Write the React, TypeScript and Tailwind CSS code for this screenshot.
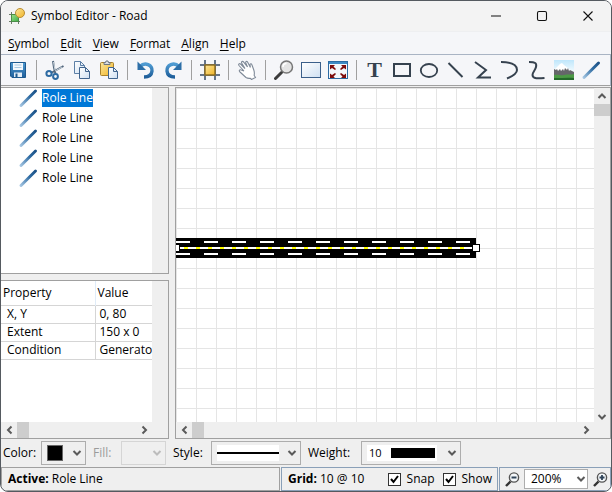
import type { ReactNode } from "react";

const steel = "#36424f";

function Icon({ children, size = 20 }: { children: ReactNode; size?: number }) {
  return (
    <svg width={size} height={size} viewBox="0 0 20 20" fill="none" aria-hidden="true" className="shrink-0">
      {children}
    </svg>
  );
}

function Gradients() {
  return (
    <svg width="0" height="0" aria-hidden="true" className="absolute">
      <defs>
        <linearGradient id="role" gradientUnits="userSpaceOnUse" x1="2" y1="18" x2="17" y2="2">
          <stop offset="0" stopColor="#a9c9e4" />
          <stop offset="0.6" stopColor="#2f6ca3" />
          <stop offset="1" stopColor="#1d5287" />
        </linearGradient>
        <linearGradient id="sheet" x1="0" y1="0" x2="1" y2="1">
          <stop offset="0" stopColor="#fff" />
          <stop offset="1" stopColor="#cfe0f2" />
        </linearGradient>
        <linearGradient id="gold" x1="0" y1="0" x2="1" y2="1">
          <stop offset="0" stopColor="#fbe69a" />
          <stop offset="1" stopColor="#f0b428" />
        </linearGradient>
        <linearGradient id="green" x1="0" y1="0" x2="1" y2="1">
          <stop offset="0" stopColor="#9be08a" />
          <stop offset="1" stopColor="#3fae48" />
        </linearGradient>
        <linearGradient id="blue" x1="0" y1="0" x2="0" y2="1">
          <stop offset="0" stopColor="#4f9bd2" />
          <stop offset="1" stopColor="#1f5f9b" />
        </linearGradient>
        <linearGradient id="sky" x1="0" y1="0" x2="0" y2="1">
          <stop offset="0" stopColor="#bfe6fb" />
          <stop offset="0.6" stopColor="#f2fbff" />
        </linearGradient>
      </defs>
    </svg>
  );
}

const RoleIcon = () => (
  <Icon>
    <path d="M3 17.500 17.500 3" stroke="url(#role)" strokeWidth="3" strokeLinecap="round" />
  </Icon>
);

const Magnifier = () => (
  <Icon>
    <path d="m1.500 18.500 6-6" stroke="#3c3c3c" strokeWidth="3" strokeLinecap="round" />
    <circle cx="12.500" cy="7" r="6" fill="#e4e4e4" stroke="#777" strokeWidth="1.500" />
    <path d="M9 7c0-2 1.500-3.500 3.500-3.500" stroke="#fff" strokeWidth="1.500" />
  </Icon>
);

type Tool = { label: string; icon: ReactNode };

const groups: Tool[][] = [
  [
    {
      label: "Save",
      icon: (
        <Icon>
          <path d="M2.500 2.500h15v15H4l-1.500-1.500z" fill="url(#blue)" stroke="#1d5a90" />
          <path d="M5 3h10v7H5z" fill="#f4f9fd" />
          <path d="M6.500 5h7M6.500 7.500h7" stroke="#a9c8e0" />
          <path d="M6 12.500h8V17H6z" fill="#e4eef7" />
          <path d="M7.500 13.500h2V17h-2z" fill="#1d5a90" />
        </Icon>
      ),
    },
  ],
  [
    {
      label: "Cut",
      icon: (
        <Icon>
          <path d="m8 1 1 6.500 1.500 6.500M18.500 6 6 13" stroke="#53687e" strokeWidth="2" />
          <path d="m8.500 2 1.500 8M17 7l-7 4" stroke="#e6edf3" strokeWidth="0.800" />
          <circle cx="4" cy="13.500" r="2.600" stroke="#2d6ba3" strokeWidth="2" />
          <circle cx="10.500" cy="16.500" r="2.400" stroke="#2d6ba3" strokeWidth="2" />
        </Icon>
      ),
    },
    {
      label: "Copy",
      icon: (
        <Icon>
          <path d="M2.500 1.500h6l4 4v8h-10z" fill="url(#sheet)" stroke="#5c7fa6" />
          <path d="M8.500 1.500v4h4" stroke="#5c7fa6" />
          <path d="M7.500 7.500h6l4 4v7h-10z" fill="url(#sheet)" stroke="#41658f" />
          <path d="M13.500 7.500v4h4" stroke="#41658f" />
        </Icon>
      ),
    },
    {
      label: "Paste",
      icon: (
        <Icon>
          <rect x="1.500" y="2.500" width="13" height="13" rx="1" fill="url(#gold)" stroke="#a9812b" />
          <path d="M5 4.500v-2h1.500L7 1h2l.5 1.500H11v2z" fill="#d9dde2" stroke="#6d7682" />
          <path d="M9.500 7.500h5l4 4v7h-9z" fill="url(#sheet)" stroke="#41658f" />
          <path d="M14.500 7.500v4h4" stroke="#41658f" />
        </Icon>
      ),
    },
  ],
  [
    {
      label: "Undo",
      icon: (
        <Icon>
          <path d="M4 6.500C9 1.500 16.500 5 16 11c-.4 4-3.500 6-8 6" stroke="url(#blue)" strokeWidth="3.400" />
          <path d="M1.500 1.500v8.500H10z" fill="#2d6fa8" />
        </Icon>
      ),
    },
    {
      label: "Redo",
      icon: (
        <Icon>
          <path d="M16 6.500C11 1.500 3.500 5 4 11c.4 4 3.500 6 8 6" stroke="url(#blue)" strokeWidth="3.400" />
          <path d="M18.500 1.500v8.500H10z" fill="#2d6fa8" />
        </Icon>
      ),
    },
  ],
  [
    {
      label: "Grid",
      icon: (
        <Icon>
          <path d="M5 0v20M15 0v20M0 5h20M0 15h20" stroke="#66758a" strokeWidth="2" />
          <rect x="5" y="5" width="10" height="10" fill="url(#gold)" stroke="#8a6a1c" strokeWidth="1.400" />
        </Icon>
      ),
    },
  ],
  [
    {
      label: "Pan",
      icon: (
        <Icon>
          <path
            d="M9 17.500 3 12c-1.500-1.500-.2-2.600 1.200-2L7 11 2 5.500C1 4 2.500 3 3.600 4L8 8.500 4.800 3.200C4 1.700 5.700.8 6.700 2.100L10.500 7 8.800 2.900C8.300 1.400 9.900.8 10.700 2.200l2.700 5.200-.4-2.600c0-1.300 1.400-1.500 1.800-.3l2 5.500c.6 1.700.7 3.700.3 5.200l1.400 2.300-4 2-1.200-1.200c-1.600.3-3.200-.1-4.300-.8z"
            fill="#fff"
            stroke="#7f8a98"
            strokeWidth="1.100"
          />
        </Icon>
      ),
    },
  ],
  [
    { label: "Zoom", icon: <Magnifier /> },
    {
      label: "Page",
      icon: (
        <Icon>
          <rect x="0.500" y="2.500" width="19" height="15" fill="url(#sheet)" stroke="#3a5f8a" />
        </Icon>
      ),
    },
    {
      label: "Fit to window",
      icon: (
        <Icon>
          <rect x="0.500" y="1.500" width="19" height="17" fill="#f3f7fb" stroke="#2d6ba3" />
          <path d="M1 2h18v2H1z" fill="#3e8ac4" />
          <path
            d="M2 5h5L5.500 6.500 8 9 7 10 4 8l-2 1.500zM18 5h-5l1.500 1.500L12 9l1 1 3-2 2 1.500zM2 18h5l-1.500-1.500L8 14l-1-1-3 2-2-1.500zM18 18h-5l1.500-1.500L12 14l1-1 3 2 2-1.500z"
            fill="#7d0c0c"
          />
        </Icon>
      ),
    },
  ],
  [
    {
      label: "Text",
      icon: <span className="font-['Liberation_Serif',serif] text-[22px] leading-5 font-bold text-[#36424f]">T</span>,
    },
    {
      label: "Rectangle",
      icon: (
        <Icon>
          <rect x="2" y="4" width="16" height="12" stroke={steel} strokeWidth="2" />
        </Icon>
      ),
    },
    {
      label: "Ellipse",
      icon: (
        <Icon>
          <ellipse cx="10" cy="10.500" rx="8.200" ry="6.500" stroke={steel} strokeWidth="1.800" />
        </Icon>
      ),
    },
    {
      label: "Line",
      icon: (
        <Icon>
          <path d="m2.500 3 14 14" stroke={steel} strokeWidth="2" />
        </Icon>
      ),
    },
    {
      label: "Polyline",
      icon: (
        <Icon>
          <path d="m2 2 11 8-8 7.500h13" stroke={steel} strokeWidth="2" />
        </Icon>
      ),
    },
    {
      label: "Arc",
      icon: (
        <Icon>
          <path d="M1 2c10 0 16 3 16 8 0 3-4 6-10 8.500" stroke={steel} strokeWidth="2" />
        </Icon>
      ),
    },
    {
      label: "Curve",
      icon: (
        <Icon>
          <path d="M2 2c6 0 8 1 7 5-1 4-3.500 5-3.500 8 0 4 6 3.500 12 3" stroke={steel} strokeWidth="2" />
        </Icon>
      ),
    },
    {
      label: "Image",
      icon: (
        <Icon>
          <path d="M0 0h20v20H0z" fill="url(#sky)" />
          <path d="m0 10 6-6 2-1 2 2 5 4 5 3v3H0z" fill="#fff" />
          <path d="m0 9 2 1 1-1 1 2 2-2 1 2 2-2 1 2 1-3 2 2 1-2 1 3 1-1 4 2v4H0z" fill="#65666a" />
          <path d="M0 15c4-1 7 1 10 0s7 0 10-1v6H0z" fill="#4b9a45" />
          <path d="M0 18c6 .5 13-1 20 0v2H0z" fill="#24692a" />
        </Icon>
      ),
    },
    { label: "Role line", icon: <RoleIcon /> },
  ],
];

function Chevron({ dir, light }: { dir: "left" | "right" | "up" | "down"; light?: boolean }) {
  const d = {
    left: "M7.500 1.500 4 5l3.500 3.500",
    right: "M2.500 1.500 6 5 2.500 8.500",
    up: "M1.500 7 5 3.500 8.500 7",
    down: "M1.500 3 5 6.500 8.500 3",
  }[dir];
  return (
    <svg width="10" height="10" viewBox="0 0 10 10" fill="none" aria-hidden="true" className="shrink-0">
      <path d={d} stroke={light ? "#bcbcbc" : "#5a5a5a"} strokeWidth="2" />
    </svg>
  );
}

function HorizontalBar() {
  return (
    <div className="flex h-4 items-center bg-[#efefef] pr-0.5">
      <button aria-label="Scroll left" className="flex w-4 justify-center">
        <Chevron dir="left" />
      </button>
      <div className="h-4 w-3 bg-[#cdcdcd]" />
      <button aria-label="Scroll right" className="ml-auto flex">
        <Chevron dir="right" />
      </button>
    </div>
  );
}

function Picker({
  label,
  options,
  labelWidth,
  width,
  disabled,
  children,
}: {
  label: string;
  options: string[];
  labelWidth: string;
  width: string;
  disabled?: boolean;
  children?: ReactNode;
}) {
  return (
    <label className={`flex items-center ${disabled ? "text-[#9b9b9b]" : ""}`}>
      <span className={labelWidth}>{label}</span>
      <span className={`relative h-6 ${width}`}>
        <select
          disabled={disabled}
          className={`size-full appearance-none border bg-[#efefef] text-transparent ${disabled ? "border-[#d5d5d5]" : "border-[#adadad]"}`}
        >
          {options.map((o) => (
            <option key={o}>{o}</option>
          ))}
        </select>
        <span className="pointer-events-none absolute inset-0 flex items-center justify-between pr-1 pl-1.5">
          <span>{children}</span>
          <Chevron dir="down" light={disabled} />
        </span>
      </span>
    </label>
  );
}

function Check({ label }: { label: string }) {
  return (
    <label className="flex items-center gap-1.5">
      <span className="relative size-[13px]">
        <input
          type="checkbox"
          defaultChecked
          className="peer block size-[13px] appearance-none border border-[#333] bg-white"
        />
        <svg
          viewBox="0 0 13 13"
          fill="none"
          aria-hidden="true"
          className="pointer-events-none absolute inset-0 hidden peer-checked:block"
        >
          <path d="m3 6 2.500 3 4.500-6" stroke="#000" strokeWidth="2" />
        </svg>
      </span>
      {label}
    </label>
  );
}

function ZoomButton({ label, plus }: { label: string; plus?: boolean }) {
  return (
    <button aria-label={label} className="flex w-4 justify-center">
      <svg width="15" height="15" viewBox="0 0 15 15" fill="none" aria-hidden="true">
        <path d="m1 14 4.500-4.500" stroke="#333" strokeWidth="2.400" />
        <circle cx="9" cy="5.500" r="4.600" fill="#f5f8fa" stroke="#555" strokeWidth="1.400" />
        <path d={plus ? "M6.500 5.500h5M9 3v5" : "M6.500 5.500h5"} stroke="#2f4358" strokeWidth="1.800" />
      </svg>
    </button>
  );
}

const properties = [
  ["X, Y", "0, 80"],
  ["Extent", "150 x 0"],
  ["Condition", "Generator"],
];

const menus = ["Symbol", "Edit", "View", "Format", "Align", "Help"];

const windowButtons = [
  { label: "Minimize", d: "M1 6h10" },
  {
    label: "Maximize",
    d: "M3 1.500h6q1.500 0 1.500 1.500v6q0 1.500-1.500 1.500H3q-1.500 0-1.500-1.500V3q0-1.500 1.500-1.500",
  },
  { label: "Close", d: "m1.500 1.500 9 9m0-9-9 9" },
];

export default function App() {
  return (
    <div className="flex h-screen flex-col overflow-hidden rounded-lg border border-[#555a60] bg-[#efefef] font-['Open_Sans','Noto_Sans',sans-serif] text-[12px] leading-4 text-black">
      <Gradients />
      <header className="flex h-[30px] shrink-0 items-center bg-[#f3f3f3] pl-2">
        <svg width="16" height="16" viewBox="0 0 16 16" fill="none" aria-hidden="true">
          <path d="M2.500 4v12M9.500 5v11M0 6.500h11M0 13.500h11" stroke="#6b7a68" />
          <rect x="2.500" y="6.500" width="7" height="7" fill="url(#green)" stroke="#4b8c48" />
          <circle cx="11" cy="5" r="4.500" fill="url(#gold)" stroke="#b98d35" />
        </svg>
        <h1 className="ml-1.5">Symbol Editor - Road</h1>
        <div className="ml-auto flex">
          {windowButtons.map(({ label, d }) => (
            <button key={label} aria-label={label} className="flex w-[46px] items-center justify-center">
              <svg width="12" height="12" viewBox="0 0 12 12" fill="none" aria-hidden="true">
                <path d={d} stroke="#111" strokeWidth="1.100" />
              </svg>
            </button>
          ))}
        </div>
      </header>

      <nav className="flex h-[23px] shrink-0 items-center gap-[11px] border-t border-[#eeeff1] bg-[#f5f6f9] pt-0.5 pl-[7px]">
        {menus.map((m) => (
          <button key={m}>
            <span className="underline underline-offset-2">{m[0]}</span>
            {m.slice(1)}
          </button>
        ))}
      </nav>

      <div className="flex h-8 shrink-0 items-center overflow-hidden border border-l-0 border-[#a9b4c4] border-b-[#a0a0a0] bg-[#f5f6f9] pl-[3px]">
        {groups.map((group, i) => (
          <div key={i} className="flex shrink-0 items-center">
            {i > 0 && <div className="mx-1 h-5 w-0.5 border-r border-[#a0a0a0]" />}
            {group.map((tool) => (
              <button key={tool.label} aria-label={tool.label} className="flex w-[27px] items-center justify-center">
                {tool.icon}
              </button>
            ))}
          </div>
        ))}
      </div>

      <main className="grid min-h-0 flex-1 grid-cols-[168px_minmax(0,1fr)] gap-1.5 pt-px">
        <div className="grid min-h-0 grid-rows-[187px_minmax(0,1fr)] gap-1.5">
          <section className="flex border-y border-r border-[#a0a0a0]">
            <ul className="flex-1 bg-white pl-[17px]">
              {Array.from({ length: 5 }, (_, i) => (
                <li key={i}>
                  <button className="flex h-5 items-center gap-1">
                    <RoleIcon />
                    <span className={i === 0 ? "bg-[#0078d7] py-px text-white" : "py-px"}>Role Line</span>
                  </button>
                </li>
              ))}
            </ul>
            <div className="w-4 bg-[#efefef]" />
          </section>
          <section className="flex min-h-0 border-y border-r border-[#a0a0a0]">
            <div className="flex min-w-0 flex-1 flex-col bg-white">
              <div className="flex-1 overflow-hidden">
                <table className="w-full table-fixed border-collapse text-left whitespace-nowrap">
                  <thead>
                    <tr className="h-6 border-b border-[#d5d5d5]">
                      <th className="w-[94px] border-r border-[#e0ecf8] pl-0.5 font-normal">Property</th>
                      <th className="overflow-hidden pl-0.5 font-normal">Value</th>
                    </tr>
                  </thead>
                  <tbody>
                    {properties.map(([name, value]) => (
                      <tr key={name} className="h-[18px] border-b border-[#d5d5d5]">
                        <td className="border-r border-[#d5d5d5] p-0 pl-1.5">{name}</td>
                        <td className="overflow-hidden p-0 pl-1">{value}</td>
                      </tr>
                    ))}
                  </tbody>
                </table>
              </div>
              <HorizontalBar />
            </div>
            <div className="w-4 bg-[#efefef]" />
          </section>
        </div>

        <section className="flex min-h-0 border border-[#a0a0a0]">
          <div className="flex min-w-0 flex-1 flex-col">
            <svg role="img" aria-label="Road symbol" className="min-h-0 w-full flex-1 bg-white" shapeRendering="crispEdges">
              <defs>
                <pattern id="grid" width="20" height="20" patternUnits="userSpaceOnUse">
                  <path d="M0 0h20v1H1v19H0z" fill="#e5e5e5" />
                </pattern>
              </defs>
              <rect width="100%" height="100%" fill="url(#grid)" />
              <path d="M0 150h300v20H0z" fill="#000" />
              <path d="M0 154h300M0 166h300" stroke="#fff" strokeWidth="2" strokeDasharray="14 14" />
              <path d="M4 160h292" stroke="#fff" strokeWidth="2" />
              <path d="M8 160h284" stroke="#ff0" strokeWidth="2" strokeDasharray="4 8" />
              <path d="M-3.500 156.500h7v7h-7zM296.500 156.500h7v7h-7z" fill="#fff" stroke="#000" />
            </svg>
            <HorizontalBar />
          </div>
          <div className="flex w-4 flex-col items-center bg-[#efefef] pb-4">
            <button aria-label="Scroll up" className="flex h-4 items-center">
              <Chevron dir="up" />
            </button>
            <div className="h-3 w-full bg-[#cdcdcd]" />
            <button aria-label="Scroll down" className="mt-auto flex">
              <Chevron dir="down" />
            </button>
          </div>
        </section>
      </main>

      <div className="flex h-7 shrink-0 items-center gap-[7px] pl-0.5">
        <Picker label="Color:" options={["Black"]} labelWidth="w-[38px]" width="w-[45px]">
          <span className="block size-4 border border-[#666] bg-black" />
        </Picker>
        <Picker label="Fill:" options={["None"]} labelWidth="w-7" width="w-[45px]" disabled />
        <Picker label="Style:" options={["Solid"]} labelWidth="w-[38px]" width="w-[90px]">
          <span className="flex h-4 w-[62px] items-center bg-white">
            <span className="h-0.5 w-full bg-black" />
          </span>
        </Picker>
        <Picker label="Weight:" options={["10"]} labelWidth="w-[53px]" width="w-[100px]">
          <span className="flex h-4 w-[70px] items-center justify-between bg-white px-0.5 text-[11px]">
            10
            <span className="h-2.5 w-11 bg-black" />
          </span>
        </Picker>
      </div>

      <footer className="flex h-6 shrink-0 gap-px">
        <div className="flex flex-1 items-center border border-[#a0a0a0] pl-1.5">
          <p>
            <b>Active:</b> Role Line
          </p>
        </div>
        <div className="flex w-[217px] items-center border border-[#8aa0b8] pl-1.5">
          <p>
            <b>Grid:</b> 10 @ 10
          </p>
          <div className="ml-auto flex gap-2 pr-[5px]">
            <Check label="Snap" />
            <Check label="Show" />
          </div>
        </div>
        <div className="flex w-[112px] items-center border border-[#8aa0b8] pl-1">
          <ZoomButton label="Zoom out" />
          <span className="relative mx-1 h-5 w-16">
            <select aria-label="Zoom level" className="size-full appearance-none border border-[#adadad] bg-white pl-1.5">
              <option>200%</option>
            </select>
            <span className="pointer-events-none absolute inset-y-0 right-0.5 flex items-center">
              <Chevron dir="down" />
            </span>
          </span>
          <ZoomButton label="Zoom in" plus />
        </div>
      </footer>
    </div>
  );
}
